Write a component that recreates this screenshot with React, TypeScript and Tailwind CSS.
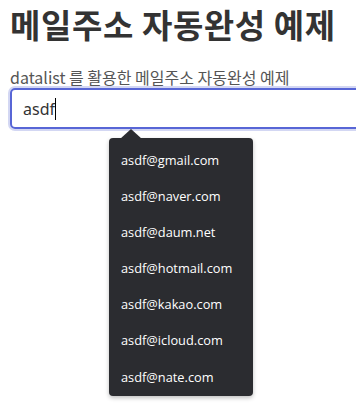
import React from "react";

const emails = [
    "asdf@gmail.com",
    "asdf@naver.com",
    "asdf@daum.net",
    "asdf@hotmail.com",
    "asdf@kakao.com",
    "asdf@icloud.com",
    "asdf@nate.com",
];

const App = () => {
    return (
        <div className="w-[356px] h-[412px] overflow-hidden bg-white pl-[10px] font-['Noto_Sans_CJK_KR',sans-serif]">
            <h1 className="w-max text-[33px] leading-[48px] tracking-[0.6px] font-bold text-[#333] whitespace-nowrap">
                메일주소 자동완성 예제
            </h1>
            <label className="block mt-[18px] text-[16px] leading-[22px] text-[#555] whitespace-nowrap">
                datalist 를 활용한 메일주소 자동완성 예제
            </label>
            <div className="w-[360px] h-[41px] rounded-[5px] border-2 border-[#5866d6] shadow-[0_0_0_2px_#d3d7f3] flex items-center pl-[11px]">
                <span className="text-[16px] text-[#333] font-['Noto_Sans',sans-serif]">asdf</span>
                <span className="w-px h-[22px] bg-black"></span>
            </div>
            <div className="relative ml-[99px] mt-[9px] w-[144px] rounded-[4px] bg-[#2b2c30] pt-[4px] pb-[1px] shadow-[0_2px_4px_rgba(0,0,0,0.25)]">
                <svg className="absolute -top-[9px] left-[11px]" width="22" height="10" viewBox="0 0 22 10">
                    <path d="M0 10 L11 0 L22 10 Z" fill="#2b2c30" />
                </svg>
                {emails.map((e) => (
                    <div
                        key={e}
                        className="h-[36.2px] flex items-center pl-[12px] text-[12.8px] text-white font-['Open_Sans',sans-serif]"
                    >
                        {e}
                    </div>
                ))}
            </div>
        </div>
    );
};

export default App;
